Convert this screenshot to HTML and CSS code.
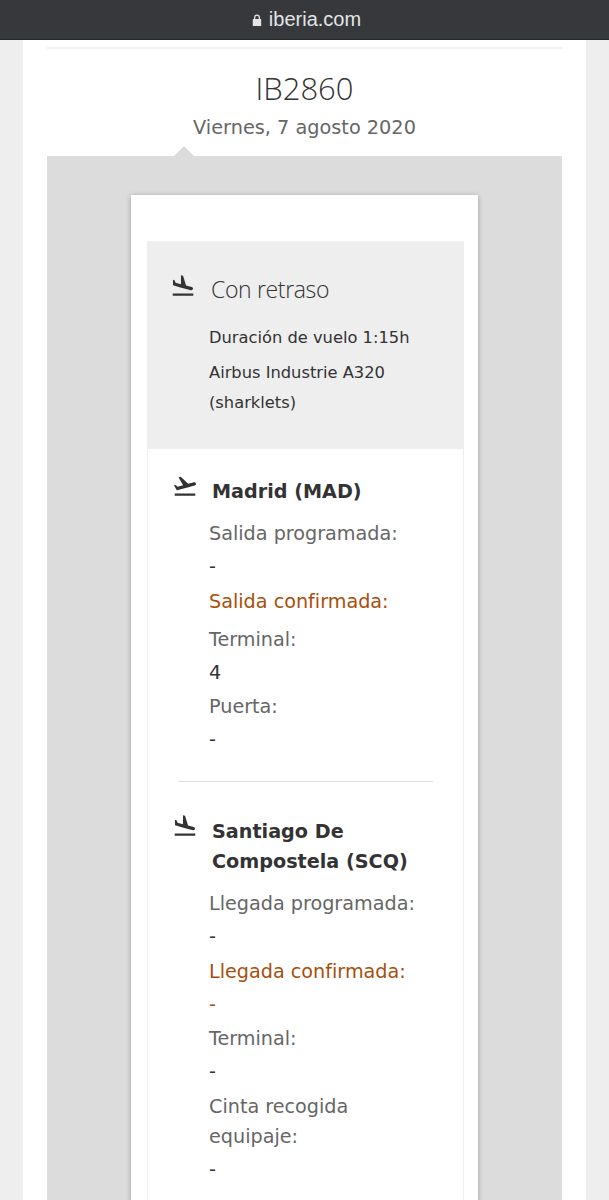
FILE: index.html
```html
<!DOCTYPE html>
<html lang="es">
<head>
    <meta charset="UTF-8">
    <meta name="viewport" content="width=device-width, initial-scale=1.0">
    <title>IB2860</title>
    <link rel="stylesheet" href="styles.css">
</head>
<body>
    <svg class="icon-defs" width="0" height="0">
        <symbol id="landing" viewBox="0 0 24 24">
            <path d="M2.5 19h19v2h-19zm7.18-5.73l4.35 1.16 5.31 1.42c.8.21 1.62-.26 1.84-1.06.21-.8-.26-1.62-1.06-1.84l-5.31-1.42-2.76-9.02L10.12 2v8.28L5.15 8.95l-.93-2.32-1.45-.39v5.17l1.6.43 5.31 1.43z"/>
        </symbol>
        <symbol id="takeoff" viewBox="0 0 24 24">
            <path d="M2.5 19h19v2h-19zm19.57-9.36c-.21-.8-1.04-1.28-1.84-1.06L14.92 10l-6.9-6.43-1.93.51 4.14 7.17-4.97 1.33-1.97-1.54-1.45.39 2.59 4.49s7.12-1.9 16.57-4.43c.81-.23 1.28-1.05 1.07-1.85z"/>
        </symbol>
    </svg>

    <div class="topbar">
        <svg class="lock" viewBox="0 0 10 12"><path d="M2 5V3.4a3 3 0 0 1 6 0V5h1.2v7H.8V5Zm1.3 0h3.4V3.4a1.7 1.7 0 0 0-3.4 0Z"/></svg>
        <span>iberia.com</span>
    </div>

    <div class="page">
        <div class="sheet">
            <div class="rule"></div>
            <h1>IB2860</h1>
            <p class="date">Viernes, 7 agosto 2020</p>

            <div class="panel">
                <div class="card">
                    <div class="status">
                        <div class="status-head">
                            <svg class="icon"><use href="#landing"/></svg>
                            <h2>Con retraso</h2>
                        </div>
                        <p>Duración de vuelo 1:15h</p>
                        <p>Airbus Industrie A320 (sharklets)</p>
                    </div>

                    <div class="legs">
                        <div class="leg">
                            <div class="leg-head">
                                <svg class="icon"><use href="#takeoff"/></svg>
                                <h3>Madrid (MAD)</h3>
                            </div>
                            <dl>
                                <dt>Salida programada:</dt>
                                <dd>-</dd>
                                <dt class="late">Salida confirmada:</dt>
                                <dt class="after-late">Terminal:</dt>
                                <dd>4</dd>
                                <dt>Puerta:</dt>
                                <dd>-</dd>
                            </dl>
                        </div>
                        <div class="leg">
                            <div class="leg-head">
                                <svg class="icon"><use href="#landing"/></svg>
                                <h3>Santiago De Compostela (SCQ)</h3>
                            </div>
                            <dl>
                                <dt>Llegada programada:</dt>
                                <dd>-</dd>
                                <dt class="late">Llegada confirmada:</dt>
                                <dd class="late">-</dd>
                                <dt>Terminal:</dt>
                                <dd>-</dd>
                                <dt>Cinta recogida equipaje:</dt>
                                <dd>-</dd>
                            </dl>
                        </div>
                    </div>
                </div>
            </div>
        </div>
    </div>
</body>
</html>
```

FILE: styles.css
```css
/* Base */
html, body {
    height: 1200px;
    overflow: hidden;
}

body {
    margin: 0;
    background-color: #eeeeee;
    font-family: "DejaVu Sans", Verdana, sans-serif;
    color: #333;
}

.icon-defs {
    display: block;
}

.topbar {
    height: 39px;
    padding-left: 4px;
    background-color: #37383c;
    border-bottom: 1px solid #26272a;
    color: #e4e4e6;
    font-family: "Liberation Sans", Arial, sans-serif;
    font-size: 20px;
    display: flex;
    align-items: center;
    justify-content: center;
    gap: 7px;
}

.lock {
    width: 10px;
    height: 12px;
    fill: #e4e4e6;
}

.page {
    padding: 0 23px;
}

.sheet {
    background: #fff;
    padding: 7px 24px 0;
}

.rule {
    height: 2px;
    background-color: #f1eeee;
}

h1 {
    margin: 21px 0 0;
    text-align: center;
    font-family: "Open Sans", sans-serif;
    font-weight: 300;
    font-size: 31px;
    line-height: 36px;
    color: #333;
}

.date {
    margin: 10px 0 0;
    text-align: center;
    font-size: 19.3px;
    line-height: 24px;
    color: #666;
}

.panel {
    position: relative;
    margin-top: 16px;
    background-color: #dcdcdc;
    padding: 39px 84px 0;
}

/* small arrow pointing at the date */
.panel::before {
    content: "";
    position: absolute;
    top: -10px;
    left: 127px;
    border-left: 10px solid transparent;
    border-right: 10px solid transparent;
    border-bottom: 10px solid #dcdcdc;
}

.card {
    background: #fff;
    padding: 46px 14px 0 16px;
    box-shadow: 0 1px 5px rgba(0, 0, 0, 0.3);
}

.status {
    background-color: #eeeeee;
    padding: 31px 24px 26px 62px;
    font-size: 16.3px;
    line-height: 30px;
}

.status p {
    margin: 0 0 5px;
}

.status-head {
    position: relative;
    margin-bottom: 17px;
}

.status-head .icon {
    position: absolute;
    left: -39px;
    top: 1px;
}

h2 {
    margin: 0 0 0 2px;
    font-family: "Open Sans", sans-serif;
    font-weight: 300;
    font-size: 23px;
    letter-spacing: -0.35px;
    line-height: 34px;
    color: #333;
}

.icon {
    width: 26px;
    height: 26px;
    fill: #333;
    flex: none;
}

.legs {
    border: 1px solid #eee;
    border-top: 0;
    padding: 0 30px;
}

.leg {
    padding: 28px 0 26px;
}

.leg + .leg {
    border-top: 1px solid #ddd;
    padding: 35px 0 60px;
}

.leg-head {
    display: flex;
    gap: 14px;
    margin-left: -6px;
}

.leg-head .icon {
    margin-top: -4px;
}

h3 {
    margin: 0;
    font-size: 19.2px;
    line-height: 30px;
    font-weight: 700;
    color: #333;
}

dl {
    margin: 12px 0 0 31px;
    font-size: 19.2px;
    line-height: 30px;
}

dt {
    color: #666;
    margin-top: 4.5px;
}

dt:first-child {
    margin-top: 0;
}

dt.after-late {
    margin-top: 8px;
}

dd {
    margin: 3px 0 0;
    color: #333;
}

.late,
dd.late {
    color: #a84f0c;
}
```
